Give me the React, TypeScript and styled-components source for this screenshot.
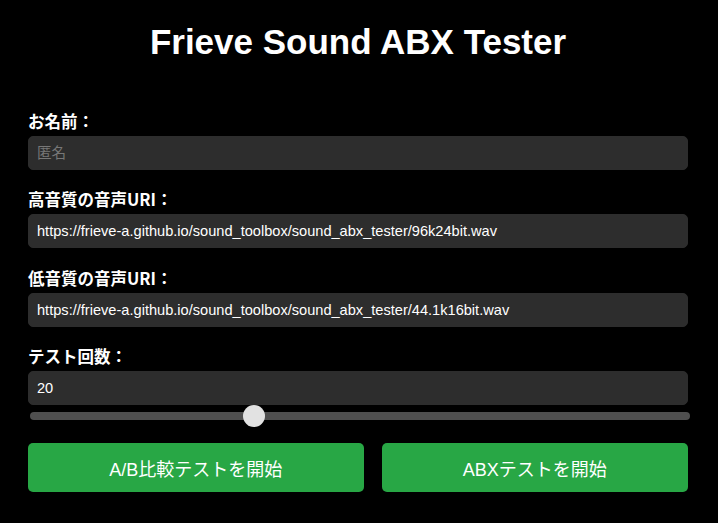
import React, { useState } from "react";
import styled, { createGlobalStyle } from "styled-components";

const GlobalStyle = createGlobalStyle`
  html, body {
    margin: 0;
    padding: 0;
    background: #000;
  }
  body {
    font-family: "Liberation Sans", "Noto Sans CJK JP", sans-serif;
    color: #fff;
  }
  * { box-sizing: border-box; }
`;

const Page = styled.div`
  padding: 22px 30px 20px 28px;
  display: flex;
  flex-direction: column;
`;

const Title = styled.h1`
  margin: 0 0 50px;
  font-size: 35px;
  line-height: 40px;
  font-weight: bold;
  text-align: center;
  color: #fff;
`;

const Field = styled.div<{ $gap?: number }>`
  display: flex;
  flex-direction: column;
  margin-bottom: ${(p) => p.$gap ?? 20}px;
`;

const Label = styled.label`
  display: block;
  font-family: "Noto Sans CJK JP", "Liberation Sans", sans-serif;
  font-size: 16.5px;
  line-height: 20px;
  font-weight: bold;
  margin: -1px 0 5px;
  color: #fff;
`;

const TextInput = styled.input`
  width: 100%;
  height: 34px;
  padding: 0 8px;
  border: 1px solid #2d2d2d;
  border-radius: 5px;
  background: #2d2d2d;
  color: #fff;
  font-family: "Liberation Sans", "Noto Sans CJK JP", sans-serif;
  font-size: 14.6px;
  outline: none;
  &::placeholder {
    color: #777;
  }
  &::-webkit-outer-spin-button,
  &::-webkit-inner-spin-button {
    -webkit-appearance: none;
    margin: 0;
  }
  -moz-appearance: textfield;
`;

const Range = styled.input`
  -webkit-appearance: none;
  appearance: none;
  display: block;
  width: 100%;
  height: 22px;
  margin: 0 0 0 2px;
  background: transparent;
  outline: none;
  &::-webkit-slider-runnable-track {
    height: 8px;
    border-radius: 4px;
    background: #4f4f4f;
  }
  &::-webkit-slider-thumb {
    -webkit-appearance: none;
    appearance: none;
    width: 22px;
    height: 22px;
    border-radius: 50%;
    background: #e2e2e2;
    margin-top: -7px;
    border: none;
  }
`;

const ButtonRow = styled.div`
  display: flex;
  gap: 18px;
  margin-top: 16px;
`;

const ActionButton = styled.button`
  flex: 1 1 auto;
  height: 49px;
  border: none;
  border-radius: 5px;
  background: #28a745;
  color: #fff;
  font-family: "Liberation Sans", "Noto Sans CJK JP", sans-serif;
  font-size: 18px;
  cursor: pointer;
  padding: 0 12px;
`;

export default function App() {
  const [name, setName] = useState("");
  const [hi, setHi] = useState(
    "https://frieve-a.github.io/sound_toolbox/sound_abx_tester/96k24bit.wav"
  );
  const [lo, setLo] = useState(
    "https://frieve-a.github.io/sound_toolbox/sound_abx_tester/44.1k16bit.wav"
  );
  const [count, setCount] = useState(20);

  return (
    <>
      <GlobalStyle />
      <Page>
        <Title>Frieve Sound ABX Tester</Title>
        <Field>
          <Label>お名前：</Label>
          <TextInput
            placeholder="匿名"
            value={name}
            onChange={(e) => setName(e.target.value)}
          />
        </Field>
        <Field $gap={21}>
          <Label>高音質の音声URI：</Label>
          <TextInput value={hi} onChange={(e) => setHi(e.target.value)} />
        </Field>
        <Field $gap={20}>
          <Label>低音質の音声URI：</Label>
          <TextInput value={lo} onChange={(e) => setLo(e.target.value)} />
        </Field>
        <Field $gap={0}>
          <Label>テスト回数：</Label>
          <TextInput
            type="number"
            value={count}
            onChange={(e) => setCount(Number(e.target.value))}
          />
          <Range
            type="range"
            min={5}
            max={50}
            value={count}
            onChange={(e) => setCount(Number(e.target.value))}
          />
        </Field>
        <ButtonRow>
          <ActionButton>A/B比較テストを開始</ActionButton>
          <ActionButton>ABXテストを開始</ActionButton>
        </ButtonRow>
      </Page>
    </>
  );
}
